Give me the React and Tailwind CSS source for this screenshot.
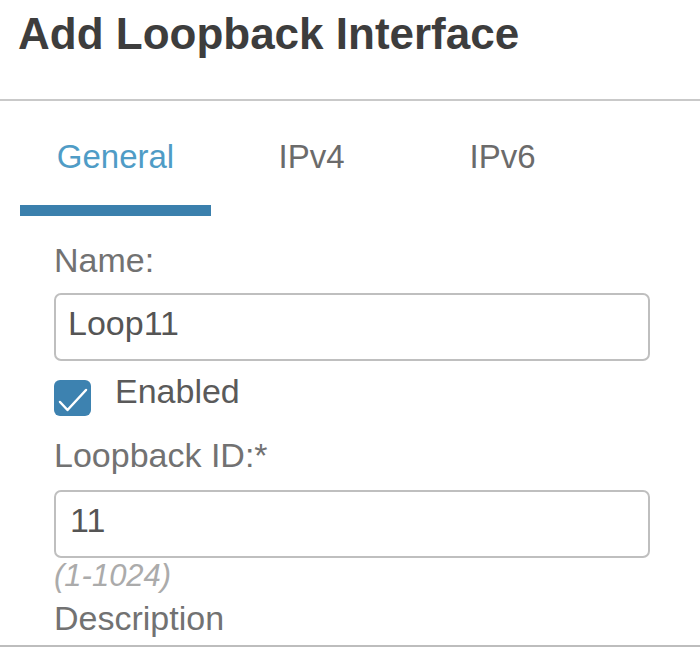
import React from "react";

const tabs = [
  { label: "General", width: "w-[191px]", active: true },
  { label: "IPv4", width: "w-[201px]", active: false },
  { label: "IPv6", width: "w-[181px]", active: false },
];

const App = () => {
  return (
    <div
      className="w-[700px] h-[649px] overflow-hidden bg-white"
      style={{ fontFamily: '"Liberation Sans", Arial, sans-serif' }}
    >
      {/* Header */}
      <div className="h-[101px] pt-[12px] pl-[18px] border-b-2 border-[#c9c9c9]">
        <h1 className="text-[44px] leading-[44px] font-bold text-[#3d3d3d]">
          Add Loopback Interface
        </h1>
      </div>

      {/* Tabs */}
      <div className="pl-[20px] pt-[39px]">
        <div className="flex">
          {tabs.map((tab) => (
            <div key={tab.label} className={`${tab.width} flex flex-col items-center`}>
              <span
                className={`text-[33px] leading-[33px] ${
                  tab.active ? "text-[#4f9cc6]" : "text-[#6b6b6b]"
                }`}
              >
                {tab.label}
              </span>
            </div>
          ))}
        </div>
        <div className="mt-[32px] w-[191px] h-[11px] bg-[#3b80ad]" />
      </div>

      {/* Form */}
      <div className="pl-[54px] w-[650px]">
        <label className="block mt-[27px] text-[34px] leading-[34px] text-[#727272]">
          Name:
        </label>
        <div className="mt-[16px] h-[68px] border-2 border-[#bfbfbf] rounded-[7px] pl-[12px] pt-[11px] text-[34px] leading-[34px] text-[#555555]">
          Loop11
        </div>

        <div className="mt-[13px] flex items-start">
          <div className="mt-[6px] w-[37px] h-[36px] rounded-[6px] bg-[#3d82b0] flex items-center justify-center">
            <svg width="37" height="36" viewBox="0 0 37 36" fill="none">
              <path
                d="M6 22 L13.5 30 L32 10"
                stroke="white"
                strokeWidth="2.5"
                strokeLinecap="round"
                strokeLinejoin="round"
              />
            </svg>
          </div>
          <span className="ml-[24px] text-[34px] leading-[34px] text-[#5a5a5a]">
            Enabled
          </span>
        </div>

        <label className="block mt-[22px] text-[34px] leading-[34px] text-[#727272]">
          Loopback ID:*
        </label>
        <div className="mt-[18px] h-[68px] border-2 border-[#bfbfbf] rounded-[7px] pl-[14px] pt-[11px] text-[34px] leading-[34px] text-[#555555]">
          11
        </div>
        <p className="mt-[2px] text-[31px] leading-[31px] italic text-[#ababab]">(1-1024)</p>
        <label className="block mt-[10px] text-[34px] leading-[34px] text-[#727272]">
          Description
        </label>
      </div>
      <div className="mt-[10px] border-b-2 border-[#bdbdbd]" />
    </div>
  );
};

export default App;
